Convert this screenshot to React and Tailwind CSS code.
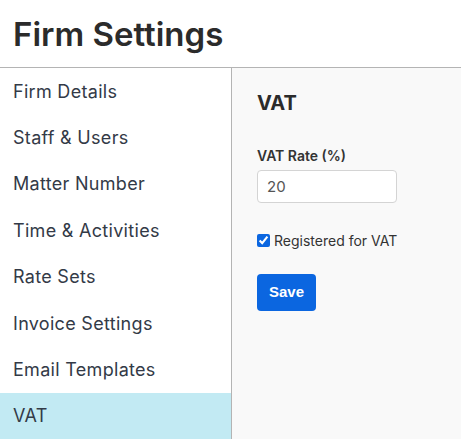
import React from "react";

const items = [
  "Firm Details",
  "Staff & Users",
  "Matter Number",
  "Time & Activities",
  "Rate Sets",
  "Invoice Settings",
  "Email Templates",
  "VAT",
];

export default function App() {
  return (
    <div className="w-[461px] h-[439px] overflow-hidden bg-white text-[#333] font-['Inter',sans-serif] flex flex-col">
      <header className="h-[67px] flex items-center px-[13px] shrink-0">
        <h1 className="text-[33px] font-semibold leading-none text-[#2b2b2b] pt-[1px]">Firm Settings</h1>
      </header>
      <div className="flex flex-1 border-t border-[#b4b4b4] min-h-0">
        <nav className="w-[232px] shrink-0 border-r border-[#b4b4b4] bg-white">
          {items.map((it) => (
            <div
              key={it}
              className={`px-[13px] pt-[11.7px] pb-[10.7px] text-[18px] tracking-[0.3px] leading-6 text-[#333a47] ${it === "VAT" ? "bg-[#c2eaf3]" : ""}`}
            >
              {it}
            </div>
          ))}
        </nav>
        <main className="flex-1 bg-[#f9f9f9] pl-[25px] pt-[21px]">
          <h2 className="text-[20px] font-bold leading-7 text-[#2b2b2b]">VAT</h2>
          <label className="block mt-[29px] text-[14px] font-semibold leading-5 text-[#333]">VAT Rate (%)</label>
          <input
            defaultValue="20"
            className="mt-[4px] w-[140px] h-[33px] rounded-[4px] border border-[#d4d4d4] bg-white px-[9px] text-[15px] text-[#555] outline-none"
          />
          <label className="flex items-center gap-[4px] mt-[27px] text-[14px] text-[#333]">
            <input type="checkbox" defaultChecked className="w-[13px] h-[13px] m-0 accent-[#0b66e0]" />
            Registered for VAT
          </label>
          <button className="mt-[23px] w-[59px] h-[37px] rounded-[4px] bg-[#0b66e0] text-white font-bold text-[15px] font-['Liberation_Sans',Arial,sans-serif]">
            Save
          </button>
        </main>
      </div>
    </div>
  );
}
